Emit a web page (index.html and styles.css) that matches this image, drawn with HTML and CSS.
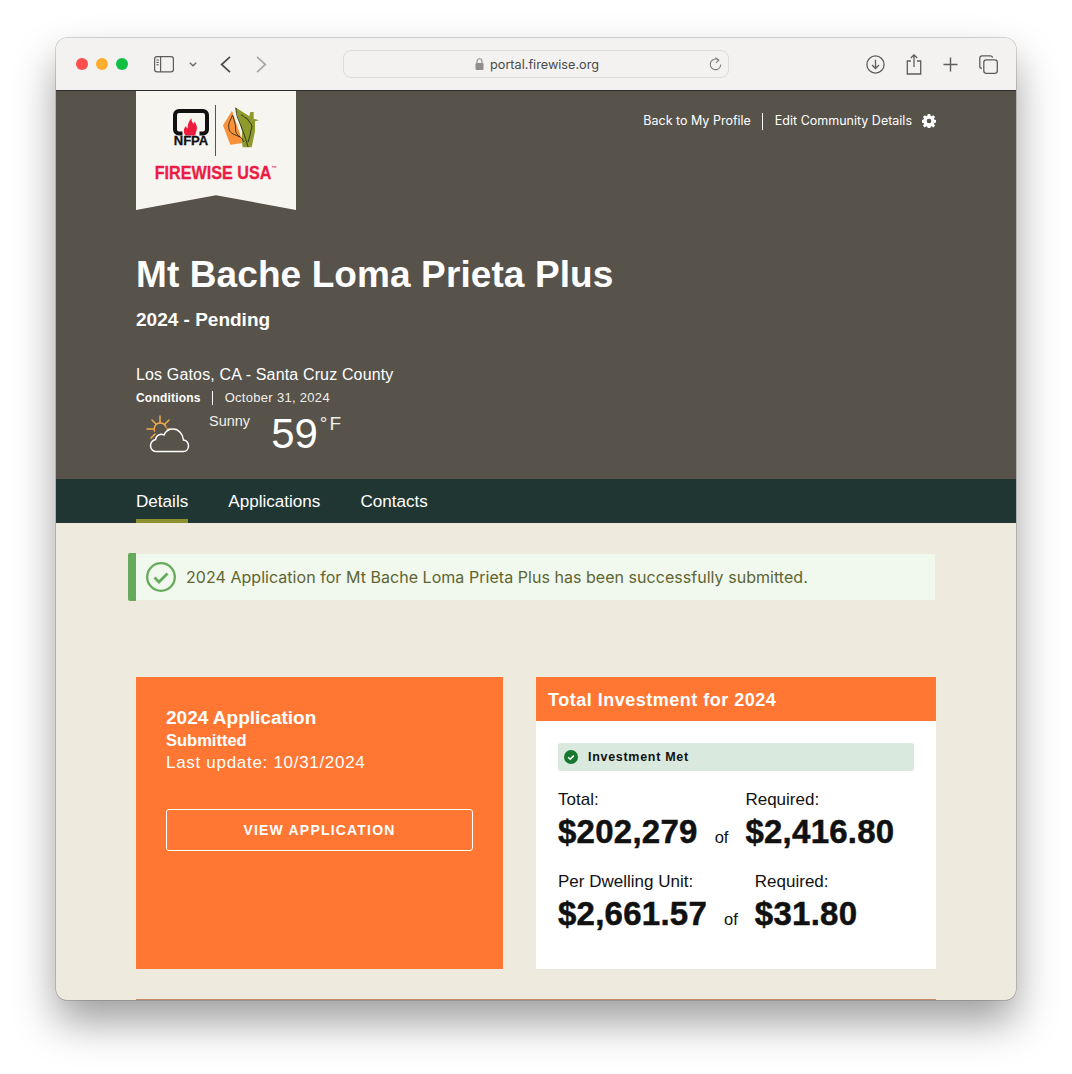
FILE: index.html
```html
<!DOCTYPE html>
<html lang="en">
<head>
  <meta charset="UTF-8">
  <title>Firewise USA Portal</title>
  <link rel="stylesheet" href="styles.css">
</head>
<body>

  <div class="window">

    <div class="toolbar">
      <div class="traffic">
        <span class="dot dot-red"></span>
        <span class="dot dot-yellow"></span>
        <span class="dot dot-green"></span>
      </div>
      <svg class="tool-icon sidebar-icon" viewBox="0 0 20 17" width="20" height="17" fill="none" stroke="#5c5c5c" stroke-width="1.2">
        <rect x="0.6" y="0.6" width="18.8" height="15.2" rx="2.4"/>
        <path d="M6.6 .6v15.2"/>
        <path d="M2.3 4h2.6M2.3 6.4h2.6M2.3 8.8h2.6" stroke-width="1"/>
      </svg>
      <svg class="chevron-down" viewBox="0 0 8 5" width="8" height="5" fill="none" stroke="#6a6a6a" stroke-width="1.4">
        <path d="M.8 .8 4 3.8 7.2 .8"/>
      </svg>
      <svg class="nav-arrow" viewBox="0 0 11 17" width="11" height="17" fill="none" stroke="#4c4c4c" stroke-width="1.7">
        <path d="M10 .8 1.6 8.5l8.4 7.7"/>
      </svg>
      <svg class="nav-arrow nav-forward" viewBox="0 0 11 17" width="11" height="17" fill="none" stroke="#a8a8a8" stroke-width="1.7">
        <path d="M1 .8l8.4 7.7L1 16.200"/>
      </svg>
      <div class="address">
        <svg class="lock" viewBox="0 0 9 12" width="9" height="12">
          <path d="M2 5V3.300a2.500 2.500 0 0 1 5 0V5" fill="none" stroke="#8e8e8e" stroke-width="1.100"/>
          <rect x="0.500" y="5" width="8" height="7" rx="1.200" fill="#8e8e8e"/>
        </svg>
        <span class="url">portal.firewise.org</span>
        <svg class="reload" viewBox="0 0 13 14" width="13" height="14" fill="none" stroke="#7c7c7c" stroke-width="1.100">
          <path d="M9.800 3.200A5.300 5.300 0 1 0 11.800 7.500"/>
          <path d="M6.500 .6 9.800 3.200 7 5.800"/>
        </svg>
      </div>
      <div class="tool-right">
        <svg viewBox="0 0 19 19" width="19" height="19" fill="none" stroke="#5c5c5c" stroke-width="1.300">
          <circle cx="9.500" cy="9.500" r="8.600"/>
          <path d="M9.500 4.800v8.600M6 10l3.500 3.500L13 10"/>
        </svg>
        <svg viewBox="0 0 16 21" width="16" height="21" fill="none" stroke="#5c5c5c" stroke-width="1.300">
          <path d="M5 7H1.300v13h13.400V7H11"/>
          <path d="M8 13V1M4.800 4 8 .9 11.200 4"/>
        </svg>
        <svg viewBox="0 0 15 15" width="15" height="15" fill="none" stroke="#5c5c5c" stroke-width="1.400">
          <path d="M7.500 .5v14M.5 7.500h14"/>
        </svg>
        <svg viewBox="0 0 19 19" width="19" height="19" fill="none" stroke="#5c5c5c" stroke-width="1.300">
          <rect x="4.800" y="4.800" width="13.500" height="13.500" rx="2.500"/>
          <path d="M2.800 13.500A2.200 2.200 0 0 1 .8 11.300V3A2.300 2.300 0 0 1 3 .8h8.300a2.200 2.200 0 0 1 2.200 2"/>
        </svg>
      </div>
    </div>

    <header class="hero">
      <div class="hero-top">
        <div class="ribbon">
          <div class="ribbon-marks">
            <div class="nfpa">
              <svg viewBox="0 0 36 27" width="36" height="27">
                <path d="M9.500 24.500H6a4 4 0 0 1-4-4V6a4 4 0 0 1 4-4h24a4 4 0 0 1 4 4v14.500a4 4 0 0 1-4 4h-3.500" fill="none" stroke="#111" stroke-width="4"/>
                <path d="M12.500 26.500c-2.500-3.500-2-7 .5-9.500.300 1.500 1 2 1.500 2.500 0-4 1.500-8 4-10.500-.300 3 1 4 2 6 .5-1 .8-1.500.8-2.500 2.500 3 3.700 7 1.700 10.500l-.8 3.500z" fill="#ed1c3c"/>
              </svg>
              <span class="nfpa-name">NFPA</span>
            </div>
            <span class="marks-divider"></span>
            <svg class="leaf-mark" viewBox="0 0 37 42" width="37" height="42">
              <path d="M9 4.700 0 19.300l7.300 19.400L20 37z" fill="#f7923a"/>
              <path d="M12 1l14.300 9.300L27.300 6h3.400v6.700l5.300 1.600-4 1v10l-3.300 16h-9l-1-7L19 25z" fill="#8f9a2e"/>
              <path d="M9.500 9c-1.500 5-5 8-3.500 14 1 5 7 6 11 8 2 1 3 3 4 5M10 10c1 5 3 8 2.500 13-.3 3 1.500 6 4.500 8M13 2c0 8 3 13 5 18 2 5 5 13 7 21M18 9c3 0 3 3 5 3 2.500 .5 2 3.500 4 4.500 2 1.500 2.500 5 1 7.500-.5 4-1.500 8-3 12" fill="none" stroke="#1d1d12" stroke-width="0.800"/>
            </svg>
          </div>
          <div class="ribbon-title">FIREWISE USA<sup>™</sup></div>
        </div>
        <nav class="util-nav">
          <a>Back to My Profile</a>
          <span class="util-sep"></span>
          <a>Edit Community Details</a>
          <svg class="gear" viewBox="0 0 16 16" width="14" height="14">
            <path fill="#fff" fill-rule="evenodd" d="M9.400 0l.4 2.100 1.300.6 1.800-1.200 2 2-1.200 1.800.6 1.300 2 .4v2.800l-2 .4-.6 1.300 1.200 1.800-2 2-1.800-1.200-1.300.6-.4 2.100H6.600l-.4-2.100-1.300-.6-1.800 1.200-2-2 1.200-1.800-.6-1.300-2-.4V6.800l2-.4.6-1.300-1.200-1.800 2-2 1.800 1.200 1.300-.6.4-2.100zM8 5.400a2.600 2.600 0 1 0 0 5.200 2.600 2.600 0 0 0 0-5.200z"/>
          </svg>
        </nav>
      </div>

      <h1 class="community-name">Mt Bache Loma Prieta Plus</h1>
      <div class="status">2024 - Pending</div>
      <div class="location">Los Gatos, CA - Santa Cruz County</div>
      <div class="conditions">
        <strong>Conditions</strong>
        <span class="cond-sep"></span>
        <span>October 31, 2024</span>
      </div>
      <div class="weather">
        <svg class="weather-icon" viewBox="0 0 44 38" width="44" height="38" fill="none" stroke-linecap="round">
          <path d="M14 1v7M1 14h6M6 5l4 4M23 5l-4 4M5 23l4-4M21 14h4" stroke="#f0a94b" stroke-width="1.500"/>
          <path d="M8.500 16A6 6 0 0 1 20 12" stroke="#f0a94b" stroke-width="1.500"/>
          <path d="M9 36.500h28.500c3 0 5-2.500 5-5.500 0-3-2-5.500-5-6-.5-6-5-11-10.500-11-4 0-7.500 2.500-9 6-1.500-1-3-1-4-.5-2.500 .5-4 2.500-4.500 5-2.500 .5-5 3-5 6 0 3.500 2.500 6 5 6z" stroke="#fff" stroke-width="1.500"/>
        </svg>
        <span class="weather-text">Sunny</span>
        <span class="temp">59</span>
        <span class="temp-unit">°F</span>
      </div>
    </header>

    <nav class="tabs">
      <a class="tab tab-active">Details</a>
      <a class="tab">Applications</a>
      <a class="tab">Contacts</a>
    </nav>

    <main class="content">
      <div class="alert">
        <div class="alert-body">
          <svg class="alert-icon" viewBox="0 0 30 30" width="30" height="30" fill="none" stroke="#66aa5c">
            <circle cx="15" cy="15" r="13.800" stroke-width="2.300"/>
            <path d="M8.500 15.500l4.500 4.500 8.500-8.500" stroke-width="2.800"/>
          </svg>
          <span>2024 Application for Mt Bache Loma Prieta Plus has been successfully submitted.</span>
        </div>
      </div>

      <div class="cards">
        <section class="app-card">
          <div class="app-title">2024 Application</div>
          <div class="app-status">Submitted</div>
          <div class="app-update">Last update: 10/31/2024</div>
          <a class="app-button">VIEW APPLICATION</a>
        </section>

        <section class="invest-card">
          <div class="invest-head">Total Investment for 2024</div>
          <div class="invest-body">
            <div class="met">
              <svg viewBox="0 0 14 14" width="14" height="14">
                <circle cx="7" cy="7" r="7" fill="#17772f"/>
                <path d="M4.200 7.200l2 2 3.600-3.600" fill="none" stroke="#fff" stroke-width="1.500"/>
              </svg>
              <span>Investment Met</span>
            </div>
            <div class="figure-row">
              <div class="figure">
                <div class="figure-label">Total:</div>
                <div class="figure-value">$202,279</div>
              </div>
              <span class="figure-of">of</span>
              <div class="figure">
                <div class="figure-label">Required:</div>
                <div class="figure-value">$2,416.80</div>
              </div>
            </div>
            <div class="figure-row">
              <div class="figure">
                <div class="figure-label">Per Dwelling Unit:</div>
                <div class="figure-value">$2,661.57</div>
              </div>
              <span class="figure-of">of</span>
              <div class="figure">
                <div class="figure-label">Required:</div>
                <div class="figure-value">$31.80</div>
              </div>
            </div>
          </div>
        </section>
      </div>

      <div class="content-rule"></div>
    </main>
  </div>

</body>
</html>
```

FILE: styles.css
```css
* {
  margin: 0;
  padding: 0;
  box-sizing: border-box;
}

html,
body {
  height: 100%;
}

body {
  background: #fff;
  padding: 38px 56px 74px;
  font-family: "Liberation Sans", Arial, sans-serif;
  overflow: hidden;
}

.window {
  height: 962px;
  border-radius: 11px;
  overflow: hidden;
  background: #eeeadd;
  box-shadow: 0 0 0 0.5px rgba(0, 0, 0, 0.3), 0 22px 42px rgba(0, 0, 0, 0.38);
  display: flex;
  flex-direction: column;
}

/* browser chrome */

.toolbar {
  height: 53px;
  flex-shrink: 0;
  display: flex;
  align-items: center;
  padding-left: 20px;
  background: #f3f2f0;
  border-bottom: 1px solid #2a2a26;
  font-family: Inter, sans-serif;
}

.traffic {
  display: flex;
  gap: 8px;
  margin-right: 26px;
}

.dot {
  width: 12px;
  height: 12px;
  border-radius: 50%;
}

.dot-red { background: #fc4f4b; }
.dot-yellow { background: #fdae2e; }
.dot-green { background: #10bf43; }

.chevron-down {
  margin-left: 15px;
}

.nav-arrow {
  margin-left: 23px;
}

.nav-forward {
  margin-left: 25px;
}

.address {
  width: 386px;
  height: 28px;
  margin-left: 76px;
  border: 1px solid #dcdbd8;
  border-radius: 8px;
  background: #f3f2f0;
  display: flex;
  align-items: center;
  padding: 0 6px 0 131px;
  font-size: 12.700px;
  color: #4a4a4a;
}

.lock {
  margin-right: 6px;
}

.reload {
  margin-left: auto;
}

.tool-right {
  display: flex;
  align-items: center;
  gap: 21px;
  margin-left: 137px;
}

/* hero */

.hero {
  height: 388px;
  flex-shrink: 0;
  padding: 0 80px;
  background: #57534b;
  color: #fff;
}

.hero-top {
  display: flex;
  justify-content: space-between;
  align-items: flex-start;
}

.ribbon {
  width: 160px;
  height: 119px;
  background: #f7f5f0;
  clip-path: polygon(0 0, 100% 0, 100% 100%, 50% 87.500%, 0 100%);
  display: flex;
  flex-direction: column;
  align-items: center;
  padding-top: 14px;
}

.ribbon-marks {
  display: flex;
  align-items: flex-start;
  height: 52px;
}

.nfpa {
  width: 37px;
  margin-right: 5px;
  margin-top: 4px;
  display: flex;
  flex-direction: column;
  align-items: center;
}

.nfpa-name {
  font-size: 13px;
  font-weight: 700;
  line-height: 9px;
  color: #111;
  -webkit-text-stroke: 0.3px #111;
}

.marks-divider {
  width: 1px;
  height: 51px;
  background: #555;
  margin-right: 7px;
}

.leaf-mark {
  margin-top: 1px;
}

.ribbon-title {
  margin-top: 5px;
  font-size: 19px;
  font-weight: 700;
  color: #ed1c45;
  -webkit-text-stroke: 0.3px #ed1c45;
  transform: scaleX(0.85);
  white-space: nowrap;
  line-height: 22px;
}

.ribbon-title sup {
  font-size: 6px;
  vertical-align: top;
  line-height: 12px;
  -webkit-text-stroke: 0;
}

.util-nav {
  display: flex;
  align-items: center;
  margin-top: 21px;
  font-family: Inter, sans-serif;
  font-size: 12.500px;
  line-height: 18px;
}

.util-sep {
  width: 1px;
  height: 17px;
  background: #fff;
  margin: 0 12px 0 11px;
}

.gear {
  margin-left: 10px;
}

.community-name {
  margin-top: 44px;
  font-size: 37px;
  line-height: 42px;
  font-weight: 700;
  letter-spacing: 0.100px;
}

.status {
  margin-top: 12px;
  font-size: 19px;
  line-height: 24px;
  font-weight: 700;
}

.location {
  margin-top: 32px;
  font-size: 16px;
  line-height: 22px;
  letter-spacing: 0.150px;
}

.conditions {
  display: flex;
  align-items: center;
  margin-top: 4px;
  font-size: 13px;
  line-height: 16px;
  letter-spacing: 0.300px;
  color: #f1efe9;
}

.conditions strong {
  color: #fff;
  font-size: 12px;
  letter-spacing: 0.200px;
}

.cond-sep {
  width: 1px;
  height: 14px;
  background: #fff;
  margin: 0 12px 0 11px;
}

.weather {
  display: flex;
  align-items: flex-start;
  margin-top: 2px;
}

.weather-icon {
  margin: 7px 0 0 10px;
}

.weather-text {
  margin: 3px 0 0 19px;
  font-size: 14.500px;
  line-height: 20px;
  color: #f1efe9;
}

.temp {
  margin: 6px 0 0 21px;
  font-size: 42px;
  line-height: 40px;
}

.temp-unit {
  margin: 6px 0 0 2px;
  font-size: 19px;
  line-height: 20px;
  letter-spacing: 2px;
  color: #f1efe9;
}

/* tabs */

.tabs {
  height: 44px;
  flex-shrink: 0;
  display: flex;
  gap: 40px;
  padding: 0 80px;
  background: #203633;
}

.tab {
  height: 44px;
  padding-top: 12px;
  font-size: 17.100px;
  line-height: 22px;
  color: #fff;
  border-bottom: 4px solid transparent;
}

.tab-active {
  border-bottom-color: #8d9130;
}

/* content */

.content {
  flex: 1;
  padding: 30px 80px 0;
  display: flex;
  flex-direction: column;
}

.alert {
  height: 48px;
  margin: 0 1px 0 -8px;
  border-left: 8px solid #66aa5c;
  border-radius: 2px 0 0 2px;
  display: flex;
  align-items: center;
}

.alert-body {
  flex: 1;
  height: 46px;
  padding-left: 10px;
  background: #f1f8ee;
  display: flex;
  align-items: center;
  gap: 10px;
  font-family: Inter, sans-serif;
  font-size: 16px;
  letter-spacing: 0.040px;
  color: #5e6531;
}

.cards {
  display: flex;
  justify-content: space-between;
  align-items: stretch;
  margin-top: 76px;
  height: 292px;
}

.app-card {
  width: 367px;
  padding: 30px;
  background: #ff7733;
  color: #fff;
}

.app-title {
  font-size: 19px;
  line-height: 22px;
  font-weight: 700;
}

.app-status {
  font-size: 16.500px;
  line-height: 22px;
  font-weight: 700;
}

.app-update {
  margin-top: 2px;
  font-size: 17px;
  line-height: 20px;
  letter-spacing: 0.700px;
}

.app-button {
  display: block;
  height: 42px;
  margin-top: 36px;
  border: 1px solid #fff;
  border-radius: 3px;
  text-align: center;
  font-size: 14px;
  line-height: 40px;
  font-weight: 700;
  letter-spacing: 1.200px;
}

.invest-card {
  width: 400px;
  background: #fff;
}

.invest-head {
  height: 44px;
  padding-left: 12px;
  background: #ff7733;
  color: #fff;
  font-size: 18px;
  font-weight: 700;
  line-height: 46px;
  letter-spacing: 0.500px;
}

.invest-body {
  padding: 22px 22px 0;
}

.met {
  height: 28px;
  display: flex;
  align-items: center;
  gap: 10px;
  padding-left: 6px;
  border-radius: 3px;
  background: #dae9dd;
  font-size: 12.500px;
  font-weight: 700;
  letter-spacing: 0.700px;
  color: #111;
}

.figure-row {
  display: flex;
  gap: 17px;
  margin-top: 19px;
  color: #111;
}

.figure-row + .figure-row {
  margin-top: 20px;
}

.figure-label {
  font-size: 17px;
  line-height: 20px;
}

.figure-value {
  margin-top: 2px;
  font-size: 33px;
  line-height: 40px;
  font-weight: 700;
  letter-spacing: 0.250px;
  -webkit-text-stroke: 0.5px #111;
}

.figure-of {
  align-self: flex-end;
  font-size: 16.500px;
  line-height: 30px;
}

.content-rule {
  margin-top: auto;
  height: 1px;
  background: #c58a62;
}
```
